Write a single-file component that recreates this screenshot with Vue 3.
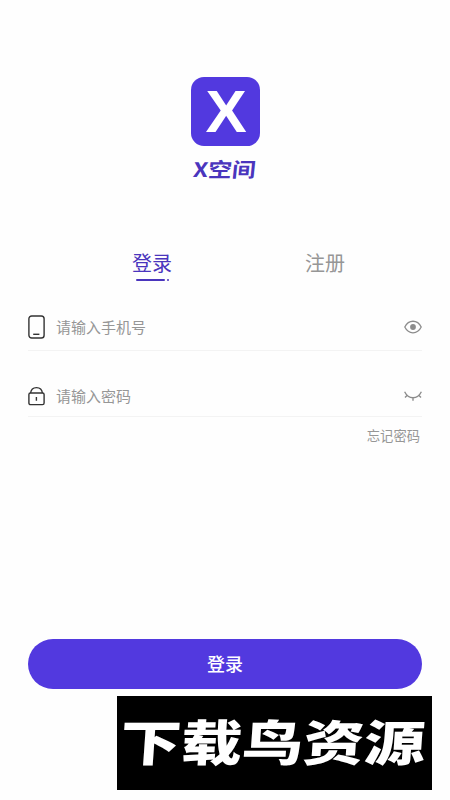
<script setup>
import { ref } from 'vue'

const tabs = ['登录', '注册']
const active = ref(0)
const phone = ref('')
const password = ref('')
</script>

<template>
  <main class="page">
    <header class="brand">
      <div class="logo"><span>X</span></div>
      <h1 class="name">X空间</h1>
    </header>

    <nav class="tabs">
      <button
        v-for="(tab, i) in tabs"
        :key="tab"
        type="button"
        class="tab"
        :class="{ active: active === i }"
        @click="active = i"
      >
        <span>{{ tab }}</span>
        <i v-if="active === i" class="marker"><b></b><b class="dot"></b></i>
      </button>
    </nav>

    <form class="form" @submit.prevent>
      <label class="field phone">
        <svg width="17" height="24" viewBox="0 0 17 24" fill="none" stroke="#333" stroke-width="1.4">
          <rect x="0.9" y="1" width="15.2" height="22" rx="2.8" />
          <path d="M5.2 19.3h6.2" />
        </svg>
        <input v-model="phone" type="text" placeholder="请输入手机号" />
        <svg width="18" height="14" viewBox="0 0 18 14" fill="none" stroke="#8c8c8c" stroke-width="1.3">
          <path d="M0.8 7C4.6-0.7 13.4-0.7 17.2 7C13.4 14.7 4.6 14.7 0.8 7Z" />
          <circle cx="9" cy="7" r="2.9" fill="#8c8c8c" stroke="none" />
        </svg>
      </label>
      <label class="field secret">
        <svg width="17" height="20" viewBox="0 0 17 20" fill="none" stroke="#333" stroke-width="1.4">
          <rect x="0.9" y="7" width="15.2" height="11.6" rx="1.6" />
          <path d="M2.6 7C3 3.5 5.3 1.6 8.5 1.6S14 3.5 14.4 7M8.4 11v3.8" />
        </svg>
        <input v-model="password" type="password" placeholder="请输入密码" />
        <svg width="18" height="12" viewBox="0 0 18 12" fill="none" stroke="#8c8c8c" stroke-width="1.4">
          <path d="M0.6 1.7C4.6 9.8 13.4 9.8 17.4 1.7M9 7.8v2.9M3.5 5L1 7.4M14.5 5l2.5 2.4" />
        </svg>
      </label>
      <a class="forgot">忘记密码</a>
      <button type="submit" class="submit">登录</button>
    </form>

    <footer class="banner">
      <svg width="315" height="94" viewBox="0 0 315 94">
        <text
          class="banner-text"
          transform="translate(2 64.5) skewX(-4) scale(1 0.8)"
          textLength="305"
          lengthAdjust="spacingAndGlyphs"
        >下载鸟资源</text>
      </svg>
    </footer>
  </main>
</template>

<style>
body {
  background: #fff;
}
</style>

<style scoped>
.page {
  box-sizing: border-box;
  width: 450px;
  height: 800px;
  padding-top: 77px;
  overflow: hidden;
  background: #fefefe;
  font-family: "Noto Sans CJK SC", sans-serif;
}
button,
input {
  padding: 0;
  border: 0;
  background: none;
  font-family: inherit;
}
.brand {
  display: flex;
  flex-direction: column;
  align-items: center;
}
.logo {
  display: flex;
  align-items: center;
  justify-content: center;
  width: 69px;
  height: 69px;
  margin-left: 1px;
  border-radius: 13px;
  background: #5239df;
  color: #fff;
  font: bold 60px/69px "Liberation Sans", sans-serif;
}
.logo span {
  padding-left: 1px;
  transform: scaleX(1.03);
}
.name {
  margin: 12px 0 0;
  color: #4a35bd;
  font-size: 21px;
  font-weight: 700;
  line-height: 21px;
  transform: skewX(-6deg) scale(1.13, 0.95);
}
.tabs {
  display: flex;
  justify-content: space-between;
  margin: 70px 105px 0 132px;
  height: 34px;
}
.tab {
  display: flex;
  flex-direction: column;
  align-items: flex-start;
  width: 40px;
  color: #969696;
  font-size: 20px;
  line-height: 28px;
}
.tab.active {
  color: #4a35bd;
}
.marker {
  display: flex;
  gap: 2px;
  margin: 2px 0 0 4px;
}
.marker b {
  width: 29px;
  height: 2px;
  border-radius: 1px;
  background: #4a35bd;
}
.marker .dot {
  width: 2px;
}
.form {
  display: flex;
  flex-direction: column;
  margin: 0 28px;
}
.field {
  box-sizing: border-box;
  display: flex;
  align-items: center;
  border-bottom: 1px solid #f3f3f3;
}
.phone {
  height: 68px;
  padding-top: 21px;
}
.secret {
  height: 66px;
  padding-top: 25px;
}
.field input {
  flex: 1;
  min-width: 0;
  height: 24px;
  margin: -1px 0 0 11px;
  outline: 0;
  font-size: 15px;
  line-height: 24px;
}
.field input::placeholder {
  color: #969696;
  opacity: 1;
}
.forgot {
  align-self: flex-end;
  margin: 9px 2px 0 0;
  color: #969696;
  font-size: 13.3px;
  line-height: 20px;
}
.submit {
  height: 50px;
  margin-top: 193px;
  padding-bottom: 2px;
  border-radius: 25px;
  background: #5239df;
  color: #fff;
  font-size: 18px;
  font-weight: 500;
  line-height: 48px;
}
.banner {
  width: 315px;
  height: 94px;
  margin: 7px 0 0 117px;
  background: #000;
}
.banner svg {
  display: block;
}
.banner-text {
  fill: #fff;
  font-size: 61px;
  font-weight: 900;
}
</style>
